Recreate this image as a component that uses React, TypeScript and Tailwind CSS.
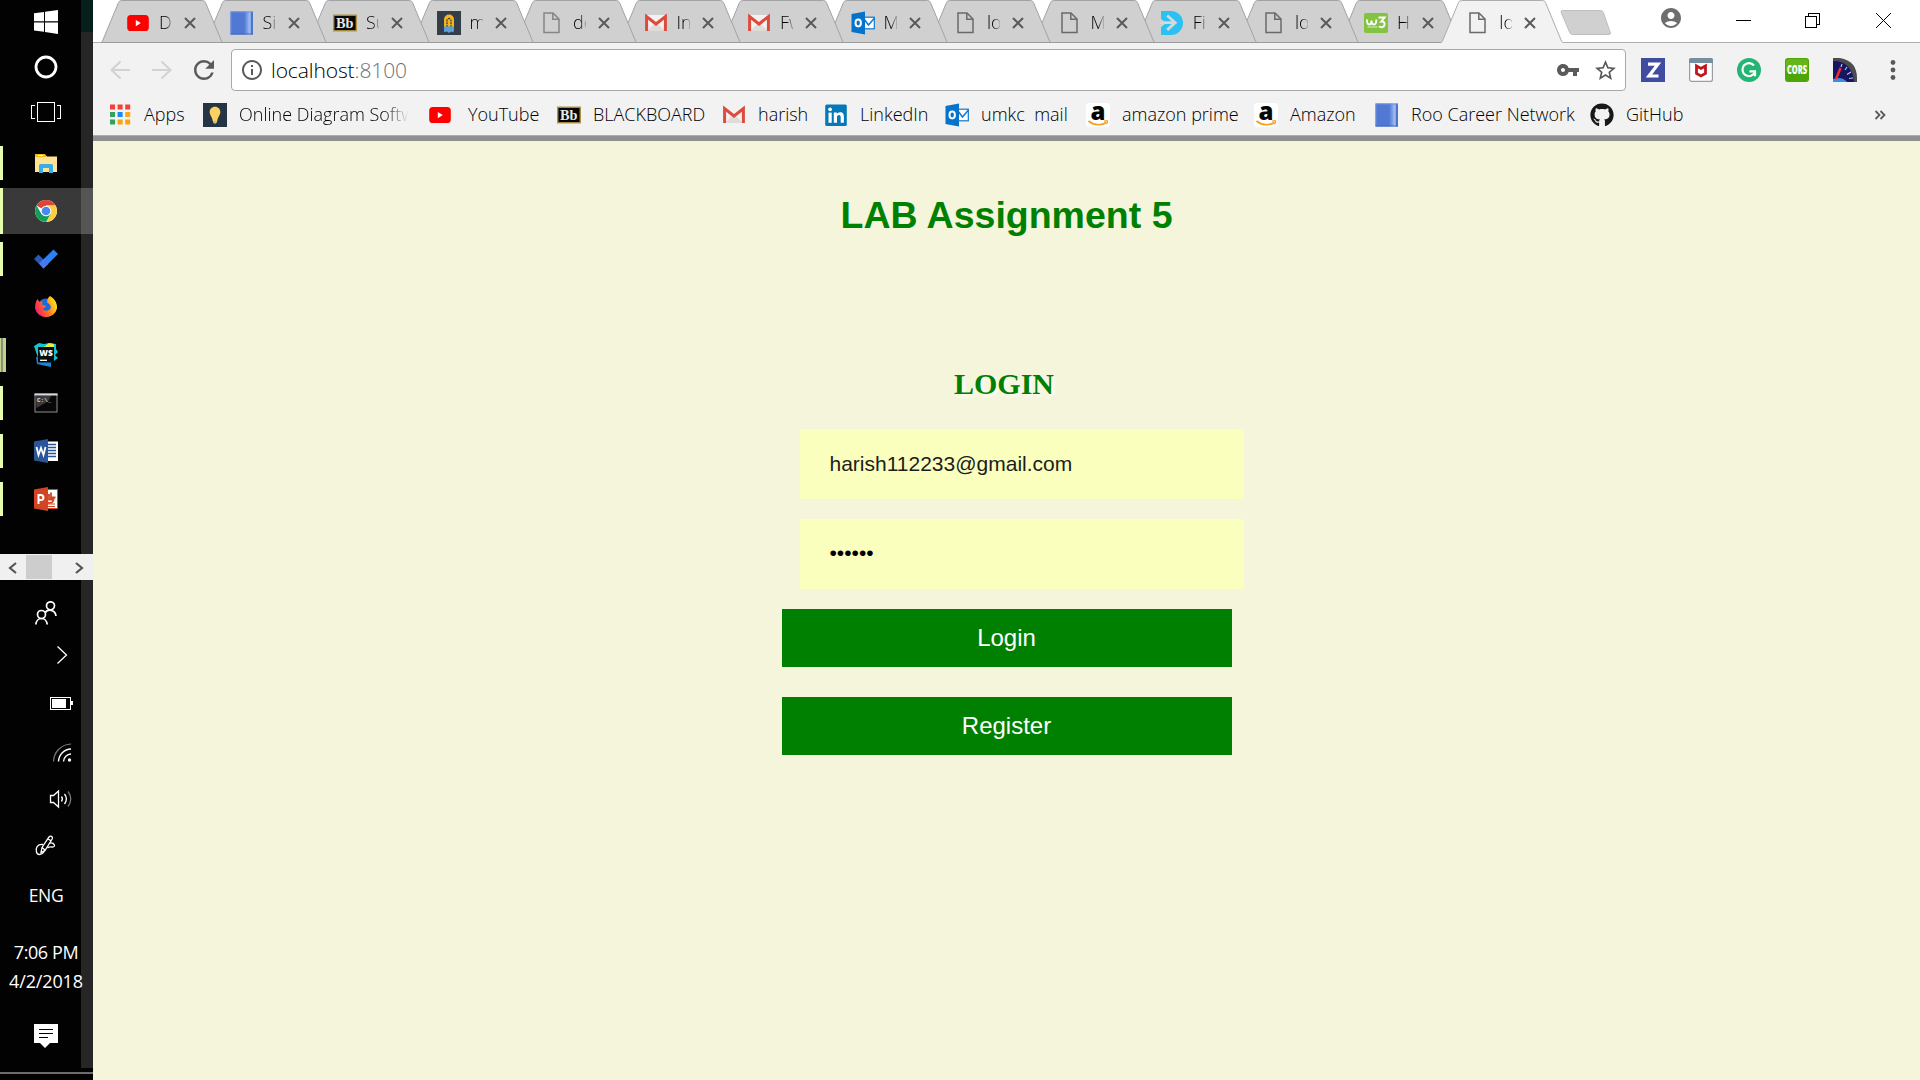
import React, { type ReactNode } from "react";
import { MdAccountCircle, MdInfoOutline, MdRefresh, MdStarBorder, MdVpnKey } from "react-icons/md";
import { FaGithub } from "react-icons/fa";

/* ---------- site icons ---------- */

function YouTubeIcon() {
  return (
    <svg width="24" height="24" viewBox="0 0 24 24">
      <rect x="1.2" y="4" width="21.6" height="16" rx="3.6" fill="#f00" />
      <path d="M9.8 9v6.2l5-3.1z" fill="#fff" />
    </svg>
  );
}

function BookIcon() {
  return (
    <svg width="24" height="24" viewBox="0 0 24 24">
      <defs>
        <linearGradient id="book" x1="0" x2="1">
          <stop offset="0" stopColor="#5178d2" />
          <stop offset="0.6" stopColor="#5178d2" />
          <stop offset="0.68" stopColor="#668bdf" />
          <stop offset="0.87" stopColor="#a9c2f2" />
          <stop offset="0.93" stopColor="#4c75d0" />
        </linearGradient>
      </defs>
      <rect x="0.5" y="0.5" width="22.5" height="23" fill="url(#book)" />
      <path d="M0.5 1h22M1 1v22" stroke="#6b90e2" />
      <path d="M0.5 23h22.5" stroke="#3f67c2" />
    </svg>
  );
}

function BbIcon() {
  return (
    <svg width="24" height="24" viewBox="0 0 24 24">
      <rect x="0.7" y="4.2" width="22.6" height="15.6" fill="#070707" stroke="#b09343" strokeWidth="1.4" />
      <text x="3" y="16.8" fontFamily="Liberation Serif" fontWeight="700" fontSize="14" fill="#e8e8e8" textLength="17.5" lengthAdjust="spacingAndGlyphs">
        Bb
      </text>
    </svg>
  );
}

function ClipIcon() {
  return (
    <svg width="24" height="24" viewBox="0 0 24 24">
      <rect width="24" height="24" fill="#343e49" />
      <path d="M7 16.500V8.500a5 5 0 0 1 10 0v8z" fill="#f7b519" />
      <path d="M10 16V9.500a2 2 0 0 1 4 0V16" fill="none" stroke="#343e49" strokeWidth="1.300" strokeDasharray="2 .8" />
      <path d="M7 15.500h10V20l-1.500 1.500-1.500-1-2 1.500-2-1.500-3 .5z" fill="#5b9fdb" />
    </svg>
  );
}

function PageIcon({ color = "#858585" }: { color?: string }) {
  return (
    <svg width="24" height="24" viewBox="0 0 24 24">
      <path d="M4 2h9l6 6v13.500H4z" fill="none" stroke={color} strokeWidth="1.500" />
      <path d="M12.800 2v6.200H19" fill="none" stroke={color} strokeWidth="1.500" />
    </svg>
  );
}

function GmailIcon() {
  return (
    <svg width="24" height="24" viewBox="0 0 24 24">
      <path d="M3 4h18v16H3z" fill="#f4f2f1" />
      <path d="M3 20L12 11l9 9z" fill="#dedbd9" />
      <path d="M2.600 20V5.500L12 13l9.400-7.500V20" fill="none" stroke="#dc4b3e" strokeWidth="3" />
    </svg>
  );
}

function OutlookIcon() {
  return (
    <svg width="24" height="24" viewBox="0 0 24 24">
      <rect x="12" y="6.200" width="11.300" height="11.600" fill="#fff" stroke="#1078cf" strokeWidth="1.200" />
      <path d="M13 8l4.500 6L23.500 7" fill="none" stroke="#1078cf" strokeWidth="1.500" />
      <path d="M0.500 3L14 .5v23L.5 21z" fill="#0572cc" />
      <ellipse cx="7.200" cy="12" rx="2.700" ry="3.400" fill="none" stroke="#fff" strokeWidth="2" />
    </svg>
  );
}

function ArrowDIcon() {
  return (
    <svg width="24" height="24" viewBox="0 0 24 24">
      <path d="M1 0h10a12 12 0 0 1 0 24H1z" fill="#2ac1f4" />
      <path d="M0 11.700h15M7.200 4.500l8 7.200-8 7.200" fill="none" stroke="#d4dadc" strokeWidth="2.800" />
      <path d="M0 7l5 4H0zM0 17l5-4H0z" fill="#d0d0d0" />
    </svg>
  );
}

function W3Icon() {
  return (
    <svg width="24" height="24" viewBox="0 0 24 24">
      <rect y="2" width="24" height="20" rx="1.800" fill="#83c341" />
      <path d="M3 8.500c0 4 .5 5 2 5s2.500-1.500 2.500-4c0 2.500.5 4 2.200 4 2 0 2.800-2 2.600-5" fill="none" stroke="#fff" strokeWidth="1.900" />
      <path d="M14.500 6.500h6l-3.200 4c2.200-.2 3.500 1 3.300 3-.3 2.500-3.500 3.500-5.600 1.800" fill="none" stroke="#fff" strokeWidth="2" />
      <path d="M3.500 16h10" stroke="#d8efc0" strokeWidth="1" />
    </svg>
  );
}

function AppsIcon() {
  const colors = ["#f44336", "#f44336", "#f44336", "#34a15a", "#1a8af0", "#fba919", "#34a15a", "#fba30c", "#fba30c"];
  return (
    <svg width="24" height="24" viewBox="0 0 24 24">
      {colors.map((c, i) => (
        <rect key={i} x={2 + (i % 3) * 7.6} y={1.5 + Math.floor(i / 3) * 7.5} width="5" height="5" fill={c} />
      ))}
    </svg>
  );
}

function BulbIcon() {
  return (
    <svg width="24" height="24" viewBox="0 0 24 24">
      <rect width="24" height="24" fill="#263544" />
      <path d="M12 3.800c-3.200 0-5.300 2.400-5.300 5.200 0 3.500 2.600 5 3 9h4.600c.4-4 3-5.500 3-9 0-2.800-2.100-5.200-5.300-5.200z" fill="#fbd160" />
      <path d="M10 18h4v1.500L12 21l-2-1.500z" fill="#b9bcb5" />
    </svg>
  );
}

function LinkedInIcon() {
  return (
    <svg width="24" height="24" viewBox="0 0 24 24">
      <rect x="1.200" y="1.500" width="21.600" height="21.500" rx="1.500" fill="#0579b7" />
      <rect x="4.500" y="9.600" width="3.200" height="10.200" fill="#fff" />
      <circle cx="6.100" cy="6.300" r="1.900" fill="#fff" />
      <path d="M9.800 9.600h3.100V11c.6-1 1.700-1.700 3.200-1.700 3 0 3.800 2 3.800 4.700v5.800h-3.200v-5.200c0-1.300-.2-2.600-1.700-2.600s-2 1.200-2 2.600v5.200H9.800z" fill="#fff" />
    </svg>
  );
}

function AmazonIcon() {
  return (
    <svg width="24" height="24" viewBox="0 0 24 24">
      <rect width="24" height="24" rx="3" fill="#fff" />
      <text x="12" y="16.500" textAnchor="middle" fontFamily="Open Sans" fontWeight="800" fontSize="24" fill="#050505">
        a
      </text>
      <path d="M2.500 18c5 4.500 13 5 18 1.200" fill="none" stroke="#f99d1c" strokeWidth="1.700" />
      <path d="M18 18.200c1.500-.6 3-.7 3.500-.2s-.2 2-1 3.300" fill="none" stroke="#f99d1c" strokeWidth="1.100" />
    </svg>
  );
}

/* ---------- tab strip ---------- */

type TabData = { icon: ReactNode; text: string; active?: boolean };

const tabs: TabData[] = [
  { icon: <YouTubeIcon />, text: "D" },
  { icon: <BookIcon />, text: "Si" },
  { icon: <BbIcon />, text: "Su" },
  { icon: <ClipIcon />, text: "m" },
  { icon: <PageIcon />, text: "de" },
  { icon: <GmailIcon />, text: "In" },
  { icon: <GmailIcon />, text: "Fw" },
  { icon: <OutlookIcon />, text: "M" },
  { icon: <PageIcon color="#6a6a6a" />, text: "lo" },
  { icon: <PageIcon color="#6a6a6a" />, text: "M" },
  { icon: <ArrowDIcon />, text: "Fi" },
  { icon: <PageIcon color="#6a6a6a" />, text: "lo" },
  { icon: <W3Icon />, text: "H" },
  { icon: <PageIcon color="#6a6a6a" />, text: "lo", active: true },
];

function Tab({ tab, index }: { tab: TabData; index: number }) {
  return (
    <div
      className={`relative flex h-[43px] w-[122px] shrink-0 items-center pl-[25px] ${index < 9 ? "-mr-[18.500px]" : "-mr-[19.800px]"}`}
      style={{ zIndex: tab.active ? 30 : 20 - index }}
    >
      <svg className="absolute inset-0" width="122" height="43" viewBox="0 0 122 43">
        <path
          d="M0 43L1.500 41 17.500 2.500Q18.500.5 20.500.5H101.500Q103.500.5 104.500 2.500L120.500 41 122 43z"
          fill={tab.active ? "#f2f2f2" : "#d0d0d0"}
        />
        <path
          d="M.3 42.500L1.500 41 17.500 2.500Q18.500.5 20.500.5H101.500Q103.500.5 104.500 2.500L120.500 41 121.700 42.500"
          fill="none"
          stroke={tab.active ? "#adadad" : "#a3a3a3"}
        />
        {!tab.active && <path d="M0 42.500h122" stroke="#9c9c9c" />}
      </svg>
      <div className="relative mt-0.5 shrink-0">{tab.icon}</div>
      <div className="relative ml-[9px] w-[13px] shrink-0 overflow-hidden bg-linear-to-r from-black from-50% to-black/20 bg-clip-text text-lg leading-6 font-light whitespace-nowrap text-transparent">
        {tab.text}
      </div>
      <svg className="relative mt-0.5 ml-[11px] shrink-0" width="14" height="14" viewBox="0 0 14 14">
        <path d="M2 2l10 10M12 2L2 12" stroke="#5a5a5a" strokeWidth="2" />
      </svg>
    </div>
  );
}

function TabStrip() {
  return (
    <div className="flex h-[43px] border-b border-[#adadad] bg-white pl-[8px]">
      <div className="-mb-px flex h-[43px] w-[1453px] shrink-0">
        {tabs.map((t, i) => (
          <Tab key={i} tab={t} index={i} />
        ))}
      </div>
      <svg className="ml-[6px] shrink-0" width="54" height="43" viewBox="0 0 54 43">
        <path d="M2.500 10.500h38q2 0 2.800 2l7 20q.7 2-1.300 2H12.500q-2 0-2.800-2l-8.500-20q-.7-2 1.300-2z" fill="#d0d0d0" stroke="#bdbdbd" />
      </svg>
      <MdAccountCircle className="mt-1.5 ml-[45px] shrink-0" size={24} color="#6e6e6e" />
      <svg className="ml-[53px] shrink-0" width="156" height="42" viewBox="0 0 156 42" shapeRendering="crispEdges">
        <path d="M0 20.500h15" stroke="#000" />
        <path d="M69.500 16.500h11v11h-11zM72.500 16.500v-3h11v11h-3" fill="none" stroke="#000" />
        <path d="M140 13l15 15M155 13l-15 15" stroke="#000" shapeRendering="auto" />
      </svg>
    </div>
  );
}

/* ---------- toolbar ---------- */

function Toolbar() {
  return (
    <div className="flex h-[54px] shrink-0 items-center">
      <svg className="ml-4" width="24" height="24" viewBox="0 0 24 24">
        <path d="M21 12H3M11.500 3.500L2.500 12l9 8.500" fill="none" stroke="#d2d2d2" strokeWidth="2" />
      </svg>
      <svg className="ml-[17px]" width="24" height="24" viewBox="0 0 24 24">
        <path d="M2 12h18M11.500 3.500l9 8.500-9 8.500" fill="none" stroke="#d2d2d2" strokeWidth="2" />
      </svg>
      <MdRefresh className="ml-[15px]" size={30} color="#5a5a5a" />
      <div className="ml-3 flex h-[42px] w-[1395px] shrink-0 items-center rounded border border-[#a9a9a9] bg-white pl-[8px]">
        <MdInfoOutline size={24} color="#5a5a5a" />
        <span className="ml-[7px] text-[21px] leading-7 font-light tracking-[-0.100px] text-black">
          localhost<span className="text-[#707070]">:8100</span>
        </span>
        <MdVpnKey className="ml-auto" size={24} color="#5a5a5a" />
        <MdStarBorder className="mr-[7px] ml-[13px]" size={25} color="#5a5a5a" />
      </div>
      <div className="ml-[15px] flex gap-6">
        <svg width="24" height="24" viewBox="0 0 24 24">
          <rect width="24" height="24" fill="#3f4c9f" />
          <path d="M7 6.200h10L8 18h9.500" fill="none" stroke="#fff" strokeWidth="3.200" />
        </svg>
        <svg width="24" height="24" viewBox="0 0 24 24">
          <rect x=".6" y=".6" width="22.800" height="22.800" rx="2" fill="#fff" stroke="#9a9ea2" strokeWidth="1.200" />
          <path d="M0 5V2q0-2 2-2h20q2 0 2 2v3z" fill="#75909c" />
          <path d="M7.500 15.500V8L12 10.500 16.500 8v7.500L12 18z" fill="none" stroke="#c4161c" strokeWidth="2.800" />
        </svg>
        <svg width="24" height="24" viewBox="0 0 24 24">
          <circle cx="12" cy="12" r="12" fill="#22b573" />
          <path d="M17 7.500A6.500 6.500 0 1 0 18 14" fill="none" stroke="#fff" strokeWidth="2.200" />
          <path d="M12.500 13.300h5.500v5" fill="none" stroke="#fff" strokeWidth="2.200" />
        </svg>
        <svg width="24" height="24" viewBox="0 0 24 24">
          <rect width="24" height="24" rx="3" fill="#4da606" />
          <path d="M1 13h22v-9q0-3-3-3H4q-3 0-3 3z" fill="#65b51c" />
          <text x="2" y="16.300" fontFamily="Open Sans" fontWeight="800" fontSize="11.500" textLength="20" lengthAdjust="spacingAndGlyphs" fill="#fff">
            CORS
          </text>
        </svg>
        <svg width="24" height="24" viewBox="0 0 24 24">
          <path d="M0 0h7Q24 3 24 20v4H0z" fill="#4b4d50" />
          <path d="M0 3Q19 3 21 24H0z" fill="#17155f" />
          <path d="M0 21q9-3 14 3H0z" fill="#3a8ee0" />
          <path d="M3 21L7.500 10" stroke="#f12a3a" strokeWidth="2.500" />
          <path d="M9 6l-1 3M14 9l-2 3M18 14l-4 2.500M20 20l-4 .5" stroke="#b9bfe8" strokeWidth="1.200" />
        </svg>
      </div>
      <svg className="ml-[24px]" width="24" height="24" viewBox="0 0 24 24" fill="#5a5a5a">
        <circle cx="12" cy="4.500" r="2.400" />
        <circle cx="12" cy="12" r="2.400" />
        <circle cx="12" cy="19.500" r="2.400" />
      </svg>
    </div>
  );
}

/* ---------- bookmarks ---------- */

function Bookmark({ icon, label, className, fade }: { icon: ReactNode; label: string; className: string; fade?: boolean }) {
  return (
    <div className={`flex shrink-0 items-center gap-3 whitespace-nowrap ${className}`}>
      <span className="shrink-0">{icon}</span>
      {fade ? (
        <span className="-mt-0.5 w-[170px] overflow-hidden bg-linear-to-r from-black from-85% to-transparent bg-clip-text text-transparent">{label}</span>
      ) : (
        <span className="-mt-0.5">{label}</span>
      )}
    </div>
  );
}

function BookmarksBar() {
  return (
    <div className="flex h-[38px] items-center pb-[3px] pl-[15px] text-lg leading-6 font-light text-black">
      <Bookmark className="w-[95px]" icon={<AppsIcon />} label="Apps" />
      <Bookmark className="w-[225px]" icon={<BulbIcon />} label="Online Diagram Software" fade />
      <Bookmark className="w-[129px] gap-4" icon={<YouTubeIcon />} label="YouTube" />
      <Bookmark className="w-[165px]" icon={<BbIcon />} label="BLACKBOARD" />
      <Bookmark className="w-[102px]" icon={<GmailIcon />} label="harish" />
      <Bookmark className="w-[121px]" icon={<LinkedInIcon />} label="LinkedIn" />
      <Bookmark className="w-[141px]" icon={<OutlookIcon />} label={"umkc\u00a0 mail"} />
      <Bookmark className="w-[168px]" icon={<AmazonIcon />} label="amazon prime" />
      <Bookmark className="w-[121px]" icon={<AmazonIcon />} label="Amazon" />
      <Bookmark className="w-[215px]" icon={<BookIcon />} label="Roo Career Network" />
      <Bookmark className="w-[120px]" icon={<FaGithub size={24} color="#191717" />} label="GitHub" />
      <svg className="mr-[34px] ml-auto" width="12" height="12" viewBox="0 0 12 12">
        <path d="M1.500 2l4 4-4 4M6.500 2l4 4-4 4" fill="none" stroke="#5a5a5a" strokeWidth="1.800" />
      </svg>
    </div>
  );
}

/* ---------- taskbar ---------- */

function Slot({ className, children, mark }: { className: string; children: ReactNode; mark?: boolean }) {
  return (
    <div className={`relative flex w-[93px] shrink-0 items-center justify-center pr-px ${className}`}>
      {mark && <div className="absolute left-0 h-[34px] w-[3px] bg-[#e7ffad]" />}
      {children}
    </div>
  );
}

function Taskbar() {
  return (
    <aside className="relative flex h-[1080px] w-[93px] shrink-0 flex-col bg-[#020202] text-white">
      <div className="absolute top-0 right-0 flex h-[1068px] w-3 flex-col bg-[#262626]">
        <div className="h-8 bg-[#061f1b]" />
      </div>
      <Slot className="h-11">
        <svg width="24" height="24" viewBox="0 0 24 24" fill="#fff">
          <path d="M0 3.300L10 2v9.300H0zM11 1.800L24 0v11.300H11zM0 12.500h10v9.300L0 20.500zM11 12.500h13V24l-13-2z" />
        </svg>
      </Slot>
      <Slot className="h-[46px]">
        <svg width="24" height="24" viewBox="0 0 24 24">
          <circle cx="12" cy="12" r="10" fill="none" stroke="#fff" strokeWidth="2.800" />
        </svg>
      </Slot>
      <Slot className="h-11">
        <svg width="30" height="22" viewBox="0 0 30 22" fill="none" stroke="#fff" shapeRendering="crispEdges">
          <path d="M6.500 1.500h17v19h-17zM4 4.500H.5v13H4M26 4.500h3.500v13H26" />
        </svg>
      </Slot>
      <Slot className="mt-[5px] h-12" mark>
        <svg width="24" height="24" viewBox="0 0 24 24">
          <path d="M1 3.500h10l2 2h10V21H1z" fill="#ffe394" />
          <path d="M1 3h10l1 3H1z" fill="#f5b916" />
          <path d="M4 4.500h5" stroke="#fff" />
          <path d="M5 22v-7.500q0-1.500 1.500-1.500h11q1.500 0 1.500 1.500V22h-4v-5H9v5z" fill="#38aee8" />
        </svg>
      </Slot>
      <Slot className="mt-px h-[46px] bg-white/22">
        <div className="absolute top-0 left-0 h-[46px] w-[3px] bg-[#e7ffad]" />
        <svg width="24" height="24" viewBox="0 0 24 24">
          <circle cx="12" cy="12" r="11" fill="#fff" />
          <path d="M12 12L2.500 6.500A11 11 0 0 1 21.500 6.500H12z" fill="#dc4437" />
          <path d="M12 6.500h9.500A11 11 0 0 1 12 23l4.800-8.500z" fill="#fdcd40" />
          <path d="M2.500 6.500A11 11 0 0 0 12 23l4.800-8.500L7.500 15z" fill="#139d58" />
          <circle cx="12" cy="12" r="5.300" fill="#fff" />
          <circle cx="12" cy="12" r="4.300" fill="#4a88f3" />
        </svg>
      </Slot>
      <Slot className="mt-px h-12" mark>
        <svg width="24" height="24" viewBox="0 0 24 24">
          <path d="M0 12l4.500-4.500 5 5-4.500 4.500z" fill="#2c56ba" />
          <path d="M5 16.500L19.500 2.500 24 7 9.500 21.500z" fill="#2f80f5" />
          <path d="M5 16.800L9.700 12l4.700 4.700-4.900 4.800z" fill="#4a78ee" />
        </svg>
      </Slot>
      <Slot className="h-12">
        <svg className="mt-px" width="24" height="24" viewBox="0 0 24 24">
          <defs>
            <linearGradient id="fox" x1="0" y1="0.700" x2="1" y2="0.300">
              <stop offset="0" stopColor="#f5176c" />
              <stop offset="0.450" stopColor="#ff6a28" />
              <stop offset="0.800" stopColor="#ffc21a" />
              <stop offset="1" stopColor="#ffe43a" />
            </linearGradient>
          </defs>
          <circle cx="12" cy="11" r="8.500" fill="#1b6be0" />
          <path d="M1 12.500C1 8 2 5 3.500 3L5.500 6l3-.5L8 8.500l4 1.500-1.500 2c-2 0-1.500 1.500-.5 2 2 1.500 5.500.5 6.500-1.500 1-3-1.500-5-3.500-6 0-3 1-5 3-6.500 5 3 7.500 7.500 7 12.500a11.300 11.300 0 0 1-22 0z" fill="url(#fox)" />
        </svg>
      </Slot>
      <Slot className="h-12">
        <div className="absolute left-0 flex h-[34px] w-1.5 bg-[#c2d292]">
          <div className="ml-px w-0.5 bg-[#88946a]" />
        </div>
        <svg width="24" height="24" viewBox="0 0 24 24">
          <path d="M0 3l5-3 5 1 5-1 7 1v5l2 3-3 3 3 3-4 3H5z" fill="#15c5ce" />
          <path d="M10 4l5-4 5 1v4z" fill="#e9ee2e" />
          <path d="M2 14l1 7 14 3v-8z" fill="#1688d6" />
          <rect x="4" y="4" width="16" height="15.500" fill="#0b0b0b" />
          <text x="5.300" y="12.500" fontFamily="Open Sans" fontWeight="800" fontSize="9.500" fill="#fff" textLength="13.500" lengthAdjust="spacingAndGlyphs">
            WS
          </text>
          <path d="M6 17.300h7" stroke="#fff" strokeWidth="1.300" />
        </svg>
      </Slot>
      <Slot className="h-12" mark>
        <svg className="-ml-px" width="24" height="24" viewBox="0 0 24 24">
          <rect x="1" y="3" width="22" height="18" fill="#080808" stroke="#8f8f8f" />
          <path d="M1.500 5l16-1-3 6-12 7z" fill="#3a3a3a" />
          <path d="M.5 3.500h23" stroke="#d5d9df" strokeWidth="2" />
          <text x="3" y="11" fontFamily="Liberation Mono" fontWeight="700" fontSize="6" fill="#ddd">
            C:\_
          </text>
        </svg>
      </Slot>
      <Slot className="h-12" mark>
        <svg width="24" height="24" viewBox="0 0 24 24">
          <rect x="12" y="2.500" width="12" height="19.500" fill="#fff" />
          <path d="M13 5.500h9M13 8.500h9M13 11.500h9M13 14.500h9M13 17.500h9" stroke="#2a5699" strokeWidth="1.400" />
          <path d="M0 2.500L14 0v24L0 21.500z" fill="#2a5699" />
          <path d="M2.500 8l2 8L7 9l2.500 7 2-8" fill="none" stroke="#fff" strokeWidth="1.800" />
        </svg>
      </Slot>
      <Slot className="h-12" mark>
        <svg width="24" height="24" viewBox="0 0 24 24">
          <rect x="12" y="2.500" width="11.500" height="19" fill="#fff" stroke="#d14524" />
          <path d="M15 8a4 4 0 1 0 4.500 4.500H15zM17 5.500v5h4.500" fill="none" stroke="#d14524" strokeWidth="1.800" />
          <path d="M14 17h7M14 19.500h7" stroke="#d14524" strokeWidth="1.200" />
          <path d="M0 2.500L14 0v24L0 21.500z" fill="#d14524" />
          <path d="M4.500 17V8h2.300c3.500 0 3.500 5 0 5H4.500" fill="none" stroke="#fff" strokeWidth="2" />
        </svg>
      </Slot>

      <div className="relative mt-[31px] flex h-[26px] w-[93px] shrink-0 items-center bg-[#f0f0f0]">
        <svg className="mt-px ml-[7px]" width="10" height="12" viewBox="0 0 10 12">
          <path d="M9 1L3 6l6 5" fill="none" stroke="#555" strokeWidth="2.200" />
        </svg>
        <div className="ml-[9px] h-6 w-[26px] bg-[#cdcdcd]" />
        <svg className="mt-px ml-[22px]" width="10" height="12" viewBox="0 0 10 12">
          <path d="M2 1l6 5-6 5" fill="none" stroke="#555" strokeWidth="2.200" />
        </svg>
      </div>

      <Slot className="mt-2 h-12 pt-px">
        <svg width="24" height="24" viewBox="0 0 24 24" fill="none" stroke="#fff" strokeWidth="1.700">
          <circle cx="16.500" cy="4.800" r="4" />
          <path d="M11.500 11.500C13 8.500 21 7.500 22 15" />
          <circle cx="7.500" cy="13.500" r="4" />
          <path d="M1.800 23.500c.7-8 10.700-8 11.400 0" />
        </svg>
      </Slot>
      <Slot className="h-[38px] pl-[31px]">
        <svg width="12" height="20" viewBox="0 0 12 20">
          <path d="M1.500 1.500L10.500 10l-9 8.500" fill="none" stroke="#fff" strokeWidth="1.300" />
        </svg>
      </Slot>
      <Slot className="mt-[6px] h-12 pb-0.5 pl-[30px]">
        <svg width="24" height="14" viewBox="0 0 24 14" shapeRendering="crispEdges">
          <rect x="1.500" y="1.500" width="20" height="12" fill="none" stroke="#fff" />
          <rect x="3" y="3" width="14" height="9" fill="#fff" />
          <rect x="22" y="5" width="2" height="4" fill="#fff" />
        </svg>
      </Slot>
      <Slot className="h-12 pl-[32px]">
        <svg width="20" height="20" viewBox="0 0 20 20" fill="none">
          <path d="M1.500 19.500A18 18 0 0 1 19 2" stroke="#777" strokeWidth="1.200" />
          <path d="M6.500 19.500A13 13 0 0 1 19 7M11.500 19.500A8 8 0 0 1 19 12" stroke="#fff" strokeWidth="1.400" />
          <circle cx="17.500" cy="18" r="1.700" fill="#fff" />
        </svg>
      </Slot>
      <Slot className="h-[46px] pl-[29px]">
        <svg width="24" height="20" viewBox="0 0 24 20" fill="none" stroke="#fff" strokeWidth="1.300">
          <path d="M1.500 6.500h3L9.500 2v16l-5-4.500h-3z" />
          <path d="M12.500 7.500q1.800 2.500 0 5M15.500 5q3.800 5 0 10" />
          <path d="M19 2.500q5.500 7.500 0 15" stroke="#777" />
        </svg>
      </Slot>
      <Slot className="h-[46px] pt-0.5">
        <svg width="24" height="24" viewBox="0 0 24 24" fill="none" stroke="#fff" strokeWidth="1.300">
          <path d="M7 18.500l1-5L15 3c1.500-1.800 4.200-.5 3.300 1.800L11 16.500zM8 13.500l3 2.500M14 5l3.500 2" />
          <path d="M9 10.500C3 10 1.500 14 2.500 18s6 3 8-1.500M15.500 9c5-1 7 4.500 2.500 4-2-.2-3.500 0-4.500 1" />
        </svg>
      </Slot>
      <div className="relative mt-[15px] flex h-6 w-[92px] items-center justify-center text-[17.500px] tracking-[-0.300px]">ENG</div>
      <div className="relative mt-[31px] flex w-[92px] flex-col items-center text-[18px] leading-[29px]">
        <span className="tracking-[-0.400px]">7:06 PM</span>
        <span className="tracking-[-0.150px]">4/2/2018</span>
      </div>
      <Slot className="mt-[28px] h-6">
        <svg width="24" height="24" viewBox="0 0 24 24">
          <path d="M0 0h24v19H16l-5 5-5-5H0z" fill="#fff" />
          <path d="M5 5.500h14M5 9.500h14M5 13.500h9" stroke="#000" strokeWidth="1.200" />
        </svg>
      </Slot>
      <div className="mt-auto mb-1.5 h-0.5 w-[93px] shrink-0 bg-[#6c6c6c]" />
    </aside>
  );
}

/* ---------- page ---------- */

function LoginPage() {
  return (
    <main className="flex flex-1 flex-col items-center bg-[#f5f5dc] font-['Liberation_Sans',sans-serif]">
      <h1 className="mt-[52px] text-[37.500px] leading-[44px] font-bold text-[green]">LAB Assignment 5</h1>
      <form className="mt-[130px] flex w-[450px] flex-col">
        <h2 className="mr-[5px] text-center font-['Liberation_Serif',serif] text-[30px] leading-[34px] font-bold text-[green] [text-shadow:2px_2px_4px_#fff]">
          LOGIN
        </h2>
        <div className="mt-[28px] ml-[18px] flex w-[444px] flex-col gap-5">
          <div className="flex h-[70px] items-center bg-[#faffbd] px-[30px] text-[21px] text-[#1c1c1c]">harish112233@gmail.com</div>
          <div className="flex h-[70px] items-center bg-[#faffbd] px-[30px] pb-0.5 text-[21px] text-black">••••••</div>
        </div>
        <div className="mt-5 flex flex-col gap-[30px] text-2xl text-white">
          <button type="button" className="h-[58px] bg-[green]">Login</button>
          <button type="button" className="h-[58px] bg-[green]">Register</button>
        </div>
      </form>
    </main>
  );
}

export default function App() {
  return (
    <div className="flex h-[1080px] w-[1920px] overflow-hidden font-['Open_Sans','Noto_Sans',sans-serif]">
      <Taskbar />
      <div className="flex w-[1827px] shrink-0 flex-col bg-[#f2f2f2]">
        <TabStrip />
        <Toolbar />
        <BookmarksBar />
        <div className="h-1.5 shrink-0 border-t border-[#ababab] bg-[#8f8f8f]" />
        <LoginPage />
      </div>
    </div>
  );
}
